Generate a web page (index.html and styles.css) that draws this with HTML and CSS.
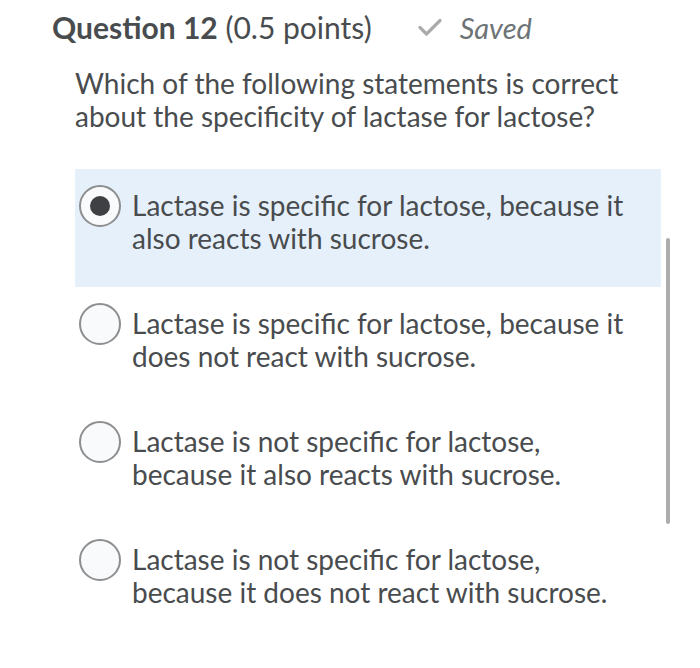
FILE: index.html
```html
<!DOCTYPE html>
<html>
<head>
<meta charset="utf-8">
<link rel="stylesheet" href="styles.css">
</head>
<body>
<div class="page">
  <div class="header">
    <h1 class="title"><span class="q">Question 12</span> (0.5 points)</h1>
    <div class="saved">
      <svg class="check" width="24" height="18" viewBox="0 0 24 18"><path d="M2 9.5 L8.5 16 L22 2.5" fill="none" stroke="#a9abad" stroke-width="3.2" stroke-linecap="round" stroke-linejoin="round"/></svg>
      <span>Saved</span>
    </div>
  </div>
  <div class="body">
    <p class="prompt">Which of the following statements is correct about the specificity of lactase for lactose?</p>
    <div class="options">
      <label class="option selected">
        <span class="radio"><span class="dot"></span></span>
        <span class="text">Lactase is specific for lactose, because it also reacts with sucrose.</span>
      </label>
      <label class="option">
        <span class="radio"></span>
        <span class="text">Lactase is specific for lactose, because it does not react with sucrose.</span>
      </label>
      <label class="option">
        <span class="radio"></span>
        <span class="text">Lactase is not specific for lactose, because it also reacts with sucrose.</span>
      </label>
      <label class="option">
        <span class="radio"></span>
        <span class="text">Lactase is not specific for lactose, because it does not react with sucrose.</span>
      </label>
    </div>
  </div>
  <div class="scrollbar"></div>
</div>
</body>
</html>
```

FILE: styles.css
```css
html, body {
  margin: 0;
  padding: 0;
  background: #ffffff;
}
body {
  font-family: Lato, "Open Sans", sans-serif;
  color: #494c4e;
}
.page {
  position: relative;
  width: 700px;
  height: 668px;
}
.header {
  display: flex;
  align-items: center;
  padding: 8px 0 0 52px;
  height: 38px;
}
.title {
  margin: 0;
  font-size: 30px;
  font-weight: 400;
  line-height: 38px;
  color: #494c4e;
}
.title .q {
  font-weight: 700;
}
.saved {
  display: flex;
  align-items: center;
  margin-left: 46px;
  font-style: italic;
  font-size: 29px;
  color: #6e7376;
}
.check {
  margin-right: 18px;
}
.body {
  padding-left: 75px;
}
.prompt {
  margin: 21px 0 0 0;
  width: 586px;
  font-size: 28px;
  line-height: 33px;
}
.options {
  margin-top: 36px;
  width: 586px;
}
.option {
  display: flex;
  align-items: flex-start;
  height: 118px;
  box-sizing: border-box;
  padding: 16px 0 0 4px;
  font-size: 28px;
  line-height: 33px;
}
.option.selected {
  background: #e6f0fb;
}
.radio {
  flex: none;
  width: 38px;
  height: 38px;
  border: 2px solid #8c8e90;
  border-radius: 50%;
  background: #f9fafb;
  display: flex;
  align-items: center;
  justify-content: center;
}
.dot {
  width: 20px;
  height: 20px;
  border-radius: 50%;
  background: #3e4043;
}
.text {
  margin: 4px 0 0 11px;
  width: 500px;
}
.scrollbar {
  position: absolute;
  left: 666px;
  top: 238px;
  width: 4px;
  height: 286px;
  border-radius: 2px;
  background: #adadad;
}
```
